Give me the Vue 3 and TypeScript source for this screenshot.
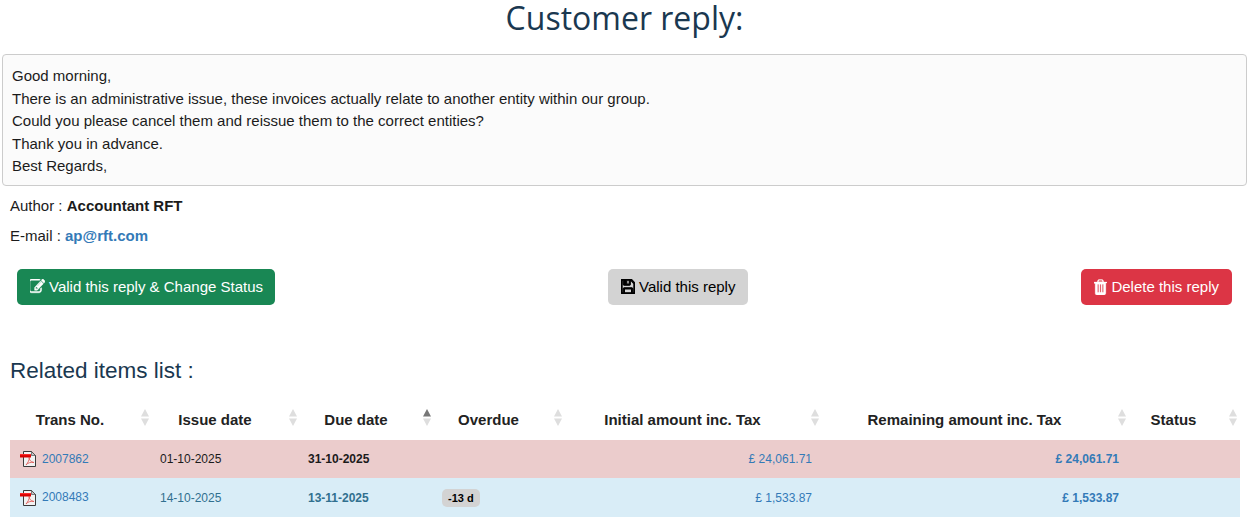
<script setup lang="ts">
interface Row {
  id: string
  issue: string
  due: string
  overdue: string
  amount: string
  cls: string
}

const columns: { label: string; width: number; active?: boolean }[] = [
  { label: 'Trans No.', width: 142 },
  { label: 'Issue date', width: 148 },
  { label: 'Due date', width: 134, active: true },
  { label: 'Overdue', width: 131 },
  { label: 'Initial amount inc. Tax', width: 257 },
  { label: 'Remaining amount inc. Tax', width: 307 },
  { label: 'Status', width: 111 },
]

const rows: Row[] = [
  { id: '2007862', issue: '01-10-2025', due: '31-10-2025', overdue: '', amount: '£ 24,061.71', cls: 'danger' },
  { id: '2008483', issue: '14-10-2025', due: '13-11-2025', overdue: '-13 d', amount: '£ 1,533.87', cls: 'info' },
]

const lines: string[] = [
  'Good morning,',
  'There is an administrative issue, these invoices actually relate to another entity within our group.',
  'Could you please cancel them and reissue them to the correct entities?',
  'Thank you in advance.',
  'Best Regards,',
]
</script>

<template>
  <div class="page">
    <h1 class="title">Customer reply:</h1>
    <div class="message">
      <div v-for="line in lines" :key="line">{{ line }}</div>
    </div>
    <p class="meta author">Author : <b>Accountant RFT</b></p>
    <p class="meta email">E-mail : <a href="#">ap@rft.com</a></p>

    <div class="actions">
      <button class="btn green" type="button">
        <svg class="ico edit" viewBox="128 128 1660 1536" preserveAspectRatio="none"><path fill="currentColor" stroke="currentColor" stroke-width="50" d="M888 1184l116-116-152-152-116 116v56h96v96h56zm440-720q-16-16-33 1l-350 350q-17 17-1 33t33-1l350-350q17-17 1-33zm80 594v190q0 119-84.500 203.500t-203.500 84.500h-832q-119 0-203.500-84.500t-84.500-203.500v-832q0-119 84.500-203.500t203.500-84.500h832q63 0 117 25 15 7 18 23 3 17-9 29l-49 49q-14 14-32 8-23-6-45-6h-832q-66 0-113 47t-47 113v832q0 66 47 113t113 47h832q66 0 113-47t47-113v-126q0-13 9-22l64-64q15-15 35-7t20 29zm-96-738l288 288-672 672h-288v-288zm444 132l-92 92-288-288 92-92q28-28 68-28t68 28l152 152q28 28 28 68t-28 68z"/></svg>
        Valid this reply &amp; Change Status
      </button>
      <button class="btn grey" type="button">
        <svg class="ico save" viewBox="128 128 1536 1536" preserveAspectRatio="none"><path fill="currentColor" stroke="currentColor" stroke-width="110" d="M512 1536h768v-384h-768v384zm896 0h128v-896q0-14-10-38.500t-20-34.500l-281-281q-10-10-34-20t-39-10v416q0 40-28 68t-68 28h-576q-40 0-68-28t-28-68v-416h-128v1280h128v-416q0-40 28-68t68-28h832q40 0 68 28t28 68v416zm-384-928v-320q0-13-9.500-22.500t-22.500-9.500h-192q-13 0-22.500 9.500t-9.500 22.500v320q0 13 9.500 22.500t22.500 9.500h192q13 0 22.500-9.500t9.500-22.500zm640 32v928q0 40-28 68t-68 28h-1344q-40 0-68-28t-28-68v-1344q0-40 28-68t68-28h928q40 0 88 20t76 48l280 280q28 28 48 76t20 88z"/></svg>
        Valid this reply
      </button>
      <button class="btn red" type="button">
        <svg class="ico trash" viewBox="192 128 1408 1536" preserveAspectRatio="none"><path fill="currentColor" stroke="currentColor" stroke-width="30" d="M704 1376v-704q0-14-9-23t-23-9h-64q-14 0-23 9t-9 23v704q0 14 9 23t23 9h64q14 0 23-9t9-23zm256 0v-704q0-14-9-23t-23-9h-64q-14 0-23 9t-9 23v704q0 14 9 23t23 9h64q14 0 23-9t9-23zm256 0v-704q0-14-9-23t-23-9h-64q-14 0-23 9t-9 23v704q0 14 9 23t23 9h64q14 0 23-9t9-23zm-544-992h448l-48-117q-7-9-17-11h-317q-10 2-17 11zm928 32v64q0 14-9 23t-23 9h-96v948q0 83-47 143.500t-113 60.500h-832q-66 0-113-47t-47-111v-955h-96q-14 0-23-9t-9-23v-64q0-14 9-23t23-9h309l70-167q15-37 54-63t79-26h320q40 0 79 26t54 63l70 167h309q14 0 23 9t9 23z"/></svg>
        Delete this reply
      </button>
    </div>

    <h2 class="subtitle">Related items list :</h2>

    <table class="items">
      <colgroup>
        <col v-for="c in columns" :key="c.label" :style="{ width: c.width + 'px' }" />
      </colgroup>
      <thead>
        <tr>
          <th v-for="c in columns" :key="c.label">
            {{ c.label }}
            <svg class="sort" viewBox="0 0 8 17" width="8" height="17">
              <path d="M4 0 8 7.500H0Z" :fill="c.active ? '#777' : '#dedede'" />
              <path d="M0 9.500H8L4 17Z" fill="#dedede" />
            </svg>
          </th>
        </tr>
      </thead>
      <tbody>
        <tr v-for="r in rows" :key="r.id" :class="r.cls">
          <td class="first">
            <svg class="pdf" viewBox="0 0 16 16" width="16" height="16">
              <path d="M3.500 .5H11.500L15.500 4.500V15.500H3.500Z" fill="#f2f2f2" stroke="#3a3a3a" />
              <path d="M11.500 .5V4.500H15.500Z" fill="#c4c4c4" stroke="#3a3a3a" stroke-width=".6" />
              <path d="M6 14C8 11.500 9.500 9 9.200 6.500C9 8.500 10.500 11 14 11.500C11 11 8 11.500 6 14Z" fill="none" stroke="#e0605c" stroke-width=".9" />
              <rect x="0" y="3" width="11" height="3.500" fill="#d80000" />
              <rect x="0" y="3" width="11" height="1.200" fill="#ff2a2a" />
            </svg>
            <a href="#">{{ r.id }}</a>
          </td>
          <td>{{ r.issue }}</td>
          <td class="bold">{{ r.due }}</td>
          <td><span v-if="r.overdue" class="badge">{{ r.overdue }}</span></td>
          <td class="num"><a href="#">{{ r.amount }}</a></td>
          <td class="num bold"><a href="#">{{ r.amount }}</a></td>
          <td></td>
        </tr>
      </tbody>
    </table>
  </div>
</template>

<style>
html, body { background: #fff; }
</style>

<style scoped>
.page {
  width: 1249px;
  height: 523px;
  overflow: hidden;
  box-sizing: border-box;
  font-family: "Liberation Sans", Arial, sans-serif;
  color: #1b1b1b;
  font-size: 15px;
  line-height: 22.5px;
}
.title {
  margin: 0 0 8px;
  height: 46px;
  line-height: 36px;
  text-align: center;
  font-family: "Open Sans", sans-serif;
  font-size: 32px;
  font-weight: 400;
  color: #1a3850;
}
.message {
  margin: 0 2px;
  padding: 10px 9px 7.500px;
  border: 1px solid #ccc;
  border-radius: 4px;
  background: #fbfbfb;
}
.meta {
  margin: 0 0 0 10px;
}
.author { margin-top: 9px; }
.email { margin-top: 7.500px; }
.meta b { font-weight: 700; }
.meta a {
  color: #337ab7;
  font-weight: 700;
  text-decoration: none;
}
.actions {
  display: flex;
  justify-content: space-between;
  padding: 0 17px;
  margin-top: 21px;
}
.btn {
  box-sizing: border-box;
  height: 36px;
  padding: 1px 13px 0;
  border: 0;
  border-radius: 5px;
  font: inherit;
  display: inline-flex;
  align-items: center;
  gap: 4px;
}
.green { background: #198754; color: #fff; padding-right: 12px; }
.grey { background: #d3d3d3; color: #000; }
.red { background: #dc3545; color: #fff; }
.ico { flex: none; margin-top: -1px; }
.edit { width: 15px; height: 15px; }
.save { width: 14px; height: 15px; }
.trash { width: 13px; height: 16px; }
.subtitle {
  margin: 51px 0 0 10px;
  font-size: 22.500px;
  font-weight: 400;
  line-height: 30px;
  color: #1a3850;
}
.items {
  margin: 14px 0 0 10px;
  width: 1230px;
  table-layout: fixed;
  border-collapse: collapse;
}
.items th {
  position: relative;
  height: 38px;
  padding: 2px 32px 0 10px;
  text-align: center;
  font-size: 15px;
  font-weight: 700;
  color: #222;
}
.sort {
  position: absolute;
  right: 3px;
  top: 9px;
}
.items td {
  padding: 0 10px 0 8px;
  font-size: 12px;
  line-height: 18px;
  height: 38px;
}
.items tr.info td { height: 39px; }
.items tr.info td:not(.first) { height: 37px; padding-top: 2px; }
.items td.first { padding-left: 10px; }
.items td.num { text-align: right; }
.items td.bold { font-weight: 700; }
.items a { color: #337ab7; text-decoration: none; }
.danger td { background: #ebcccc; color: #1b1b1b; }
.info td { background: #d9edf7; color: #31708f; }
.pdf { vertical-align: middle; margin-right: 6px; }
.badge {
  display: inline-block;
  padding: 0 6px;
  background: #d3d3d3;
  color: #000;
  border-radius: 5px;
  font-size: 11px;
  font-weight: 700;
  line-height: 18px;
}
</style>
